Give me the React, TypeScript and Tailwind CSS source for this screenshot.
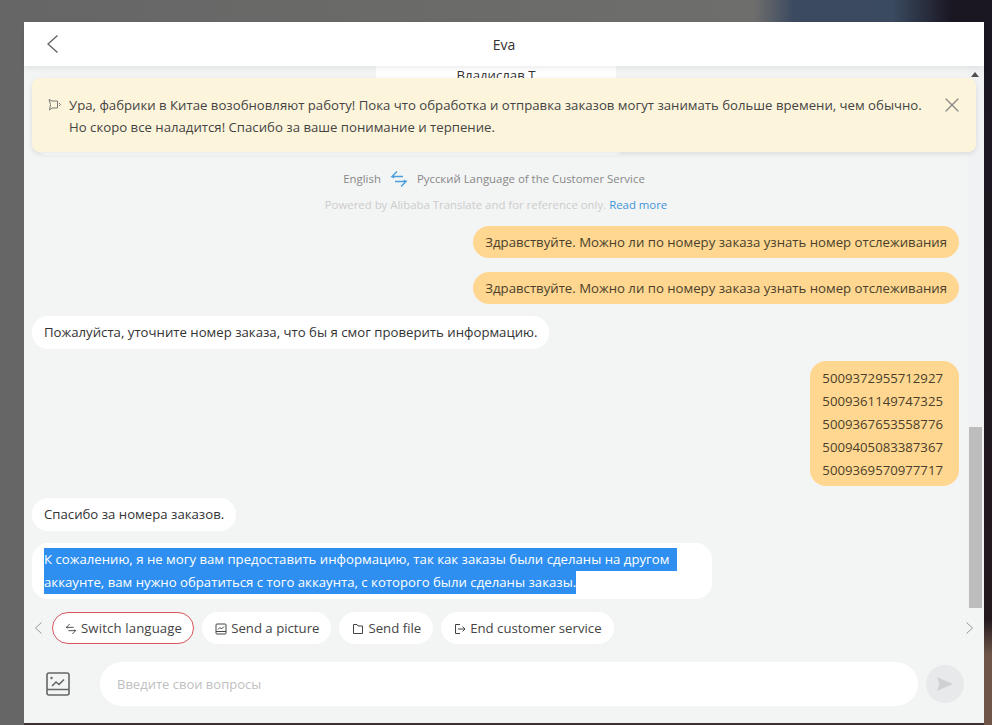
import { X } from 'lucide-react'

const font = "font-['Open_Sans','Noto_Sans',sans-serif]"

function SwapIcon({ className }: { className?: string }) {
  return (
    <svg viewBox="0 0 18 18" fill="none" stroke="currentColor" strokeWidth="1.4" className={className}>
      <path d="M7 1.500 2 6.500h11M2 6.500l2 1.500" />
      <path d="M11 16.500l5-5H5M16 11.500l-2-1.500" />
    </svg>
  )
}

function PictureIcon() {
  return (
    <svg viewBox="0 0 12 12" fill="none" stroke="currentColor" strokeWidth="1" className="h-3 w-3">
      <rect x="1" y="1" width="10" height="10" rx="1" />
      <path d="M1 8.500h10M3 6.500l2-2 1.500 1.500L9 3.500" />
    </svg>
  )
}

function FileIcon() {
  return (
    <svg viewBox="0 0 12 12" fill="none" stroke="currentColor" strokeWidth="1" className="h-3 w-3">
      <path d="M1.500 3V1.500h3.500L6 3h4.500v7.500h-9z" />
    </svg>
  )
}

function ExitIcon() {
  return (
    <svg viewBox="0 0 12 12" fill="none" stroke="currentColor" strokeWidth="1" className="h-3 w-3">
      <path d="M6 1.500H1.500v9H6M4 6h6.500M8.500 3.500 11 6 8.500 8.500" />
    </svg>
  )
}

function Chevron({ flip }: { flip?: boolean }) {
  return (
    <svg viewBox="0 0 7 12" fill="none" stroke="#999" strokeWidth="1" className="h-3 w-[7px]">
      <path d={flip ? 'M.5.5 6.500 6 .5 11.500' : 'M6.500.5.5 6l6 5.500'} />
    </svg>
  )
}

function Tool({ icon, label, active }: { icon: React.ReactNode; label: string; active?: boolean }) {
  return (
    <button
      className={`flex h-8 items-center gap-1 rounded-full bg-white pt-px text-[13.2px] text-[#444] ${
        active ? 'border border-[#d9545c] pl-3 pr-[11px] tracking-[0.13px]' : 'pl-[13px] pr-3'
      }`}
    >
      {icon}
      {label}
    </button>
  )
}

function Mine({ children, className = '' }: { children: React.ReactNode; className?: string }) {
  return (
    <div
      className={`w-fit self-end rounded-2xl bg-[#ffd790] pl-3 text-[13.2px] leading-[23px] text-[#4a3f2c] ${className}`}
    >
      {children}
    </div>
  )
}

function Theirs({ children }: { children: React.ReactNode }) {
  return (
    <div className="w-fit rounded-2xl bg-white px-3 py-[5px] text-[13.2px] leading-[23px] text-[#333]">{children}</div>
  )
}

export default function App() {
  const orders = ['5009372955712927', '5009361149747325', '5009367653558776', '5009405083387367', '5009369570977717']
  const question = 'Здравствуйте. Можно ли по номеру заказа узнать номер отслеживания'

  return (
    <div
      className={`${font} relative h-[725px] w-[992px] overflow-hidden bg-[linear-gradient(90deg,#666_0%,#6e6e6c_76%,#3c4a60_80%,#3a4a60_90%,#1a1622_96%)] pl-6 pt-[22px]`}
    >
      {/* размытый фон по краям окна */}
      <div className="absolute bottom-0 right-0 top-[22px] w-2 bg-[linear-gradient(180deg,#1a1622_0%,#241a1e_85%,#6e5548_90%,#6e5548_100%)]" />
      <div className="absolute bottom-0 left-6 h-[2px] w-[960px] bg-[#3a3230]" />

      <div className="relative flex h-[701px] w-[960px] flex-col bg-[#f3f4f4]">
        {/* шапка */}
        <div className="relative z-20 flex h-11 shrink-0 items-center justify-center bg-white shadow-[0_2px_6px_rgba(0,0,0,0.08)]">
          <svg viewBox="0 0 11 18" fill="none" stroke="#666" strokeWidth="1.4" className="absolute left-[23px] h-[18px] w-[11px]">
            <path d="M10.500.5 1 9l9.500 8.500" />
          </svg>
          <span className="pt-px text-sm text-[#333]">Eva</span>
        </div>

        <div className="relative flex h-[542px] shrink-0">
          {/* объявление */}
          <div className="absolute left-2 right-2 top-3 z-10 h-[74px] rounded-lg bg-[#fdf5db] pl-[37px] pt-4 text-[13.2px] leading-[22px] text-[#444] shadow-[0_2px_5px_rgba(0,0,0,0.1)]">
            <svg
              viewBox="0 0 14 14"
              fill="none"
              stroke="#777"
              strokeWidth="1"
              className="absolute left-4 top-5 h-[14px] w-[14px]"
            >
              <path d="M1 1.500 4 3h5.500v7H4l-2.500 2 1-5.500zM11 5l1.500 1.500L11 8" />
            </svg>
            <div>
              Ура, фабрики в Китае возобновляют работу! Пока что обработка и отправка заказов могут занимать больше
              времени, чем обычно.
              <br />
              Но скоро все наладится! Спасибо за ваше понимание и терпение.
            </div>
            <X className="absolute right-3 top-[15px] h-6 w-6 text-[#888]" strokeWidth={1.2} />
          </div>

          <div className="flex min-w-0 flex-1 flex-col pl-2 pr-[9px]">
            <div className="ml-[344px] h-9 w-[240px] shrink-0 bg-white pt-px text-center text-[13.2px] leading-4 text-[#333]">
              Владислав Т
            </div>
            <div className="h-[53px] w-[596px] shrink-0 rounded-b-2xl bg-white" />

            <div className="mt-[15px] flex items-center justify-center gap-[9px] pr-[3px] text-[11.4px] leading-4 text-[#888]">
              <span>English</span>
              <SwapIcon className="h-[18px] w-[18px] text-[#4a9fdc]" />
              <span>Русский Language of the Customer Service</span>
            </div>
            <div className="mt-[9px] pl-px text-center text-[11.4px] leading-4 text-[#ccc]">
              Powered by Alibaba Translate and for reference only. <span className="text-[#3f94d8]">Read more</span>
            </div>

            <div className="mt-[13px] flex flex-col gap-3">
              <Mine className="mb-0.5 h-8 pr-3 pt-[5px]">{question}</Mine>
              <Mine className="h-8 pr-3 pt-[5px]">{question}</Mine>
              <Theirs>Пожалуйста, уточните номер заказа, что бы я смог проверить информацию.</Theirs>
              <Mine className="pb-1 pr-4 pt-1.5">
                {orders.map((order) => (
                  <div key={order}>{order}</div>
                ))}
              </Mine>
              <Theirs>Спасибо за номера заказов.</Theirs>
              <Theirs>
                <span className="mr-[23px] block w-fit bg-[#2e8ff0] pr-2 text-white">
                  К сожалению, я не могу вам предоставить информацию, так как заказы были сделаны на другом
                </span>
                <span className="block w-fit bg-[#2e8ff0] text-white">
                  аккаунте, вам нужно обратиться с того аккаунта, с которого были сделаны заказы.
                </span>
              </Theirs>
            </div>
          </div>

          {/* полоса прокрутки */}
          <div className="flex w-4 shrink-0 flex-col items-start bg-[#f1f2f3]">
            <div className="ml-[3px] mt-[6px] h-0 w-0 border-x-4 border-b-[5px] border-x-transparent border-b-[#505050]" />
            <div className="ml-px mt-auto h-[181px] w-[13px] bg-[#bdbdbd]" />
          </div>
        </div>

        <div className="mt-1 flex h-8 shrink-0 items-center">
          <div className="ml-[11px] mr-[10px] flex">
            <Chevron />
          </div>
          <div className="flex items-center gap-2">
            <Tool active icon={<SwapIcon className="h-3 w-3" />} label="Switch language" />
            <Tool icon={<PictureIcon />} label="Send a picture" />
            <Tool icon={<FileIcon />} label="Send file" />
            <Tool icon={<ExitIcon />} label="End customer service" />
          </div>
          <div className="ml-auto mr-[11px] flex">
            <Chevron flip />
          </div>
        </div>

        <div className="mt-[18px] flex items-center">
          <svg viewBox="0 0 24 24" fill="none" stroke="#666" strokeWidth="1.6" className="ml-[22px] h-6 w-6">
            <rect x="1" y="1" width="22" height="22" rx="2" />
            <path d="M1 17.500h22M6 14l4-4 3 2.500 5-5" />
            <circle cx="5.500" cy="6" r="1.200" fill="#666" stroke="none" />
          </svg>
          <div className="ml-[30px] flex h-11 w-[818px] items-center rounded-[22px] bg-white pl-[17px] pt-0.5 text-[13px] text-[#c0c0c0]">
            Введите свои вопросы
          </div>
          <div className="ml-2 flex h-[38px] w-[38px] items-center justify-center rounded-full bg-[#e7e9ea]">
            <svg viewBox="0 0 18 18" className="h-[18px] w-[18px]" fill="#cfd2d4">
              <path d="M1 2l16 7-16 7 2.500-7z" />
            </svg>
          </div>
        </div>
      </div>
    </div>
  )
}
